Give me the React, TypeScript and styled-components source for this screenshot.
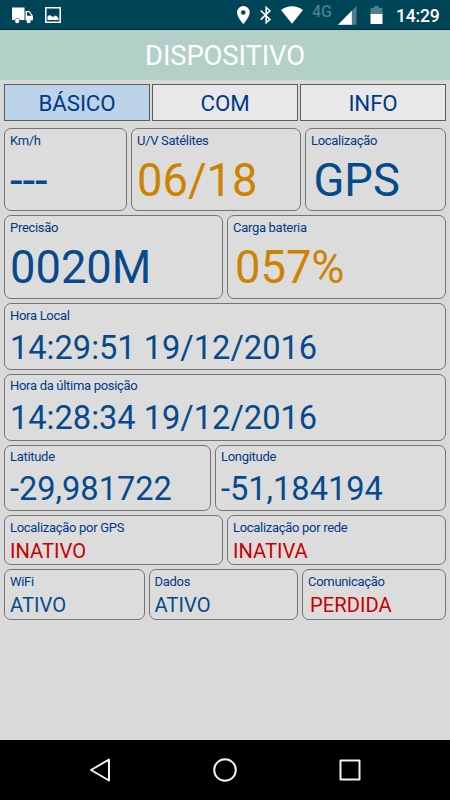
import styled, { createGlobalStyle } from 'styled-components'

const GlobalStyle = createGlobalStyle`
  * {
    box-sizing: border-box;
  }

  body {
    margin: 0;
    font-family: Roboto, 'Liberation Sans', sans-serif;
    background: #d9d9d9;
  }
`

const Screen = styled.div`
  width: 450px;
  height: 800px;
  display: flex;
  flex-direction: column;
  background: #d9d9d9;
  overflow: hidden;
`

const StatusBar = styled.div`
  height: 30px;
  flex-shrink: 0;
  background: #004557;
  border-bottom: 1px solid #002440;

  svg {
    display: block;
  }
`

const Header = styled.h1`
  height: 50px;
  flex-shrink: 0;
  margin: 0;
  background: #b2d0c8;
  color: #fff;
  font-size: 27.4px;
  font-weight: 400;
  letter-spacing: -.1px;
  line-height: 53px;
  text-align: center;
`

const Content = styled.main`
  flex: 1;
  padding: 4px 4px 0;
`

const Tabs = styled.nav`
  display: grid;
  grid-template-columns: repeat(3, 1fr);
  gap: 2px;
  margin-bottom: 7px;
`

const Tab = styled.button<{ $active?: boolean }>`
  height: 37px;
  padding: 0;
  border: 1px solid #5c5c5c;
  background: ${({ $active }) => ($active ? '#bdd3ea' : '#e8e8e8')};
  color: #003a85;
  font-family: inherit;
  font-size: 22.3px;
  letter-spacing: -.1px;
  line-height: 34px;
`

const Rows = styled.div`
  display: flex;
  flex-direction: column;
  gap: 4px;
`

const Row = styled.div<{ $columns: string; $height: number }>`
  display: grid;
  grid-template-columns: ${({ $columns }) => $columns};
  gap: 4px;
  height: ${({ $height }) => $height}px;
`

const Card = styled.section`
  padding: 3.6px 0 0 5px;
  border: 1px solid #747474;
  border-radius: 7px;
  background: #dcdcdc;
  white-space: nowrap;
`

const Label = styled.div`
  color: #003a85;
  font-size: 13px;
  letter-spacing: -.3px;
  line-height: 15px;
`

const sizes = {
  large: { font: 45.3, gap: 10.8 },
  medium: { font: 32.6, gap: 9 },
  small: { font: 20.2, gap: 6 },
}

const colors = {
  blue: '#064a8c',
  orange: '#cc8400',
  red: '#c80000',
}

type Size = keyof typeof sizes
type Color = keyof typeof colors

const Value = styled.div<{ $size: Size; $color: Color; $indent: number }>`
  margin-top: ${({ $size }) => sizes[$size].gap}px;
  padding-left: ${({ $indent }) => $indent}px;
  color: ${({ $color }) => colors[$color]};
  font-size: ${({ $size }) => sizes[$size].font}px;
  line-height: 1;
`

const NavBar = styled.footer`
  height: 60px;
  flex-shrink: 0;
  background: #000;

  svg {
    display: block;
  }
`

interface FieldProps {
  label: string
  value: string
  size: Size
  color?: Color
  indent?: number
}

function Field ({ label, value, size, color = 'blue', indent = 0 }: FieldProps) {
  return (
    <Card>
      <Label>{label}</Label>
      <Value $size={size} $color={color} $indent={indent}>{value}</Value>
    </Card>
  )
}

const StatusLeft = styled.div`
  display: flex;
  gap: 12px;
  padding: 7px 0 0 12px;
`

const StatusRight = styled.div`
  display: flex;
  align-items: flex-start;
  padding-top: 6px;
`

const StatusContent = styled.div`
  display: grid;
  grid-template-columns: 236px 1fr;
`

const Network = styled.span`
  width: 26px;
  margin-top: -2px;
  padding-left: 1px;
  color: #4c7f8b;
  font-size: 16px;
  font-weight: 500;
  line-height: 16px;
`

const Clock = styled.span`
  margin-left: 13px;
  color: #fff;
  font-size: 17.5px;
  font-weight: 500;
  letter-spacing: -.2px;
  line-height: 20px;
`

function StatusIcons () {
  return (
    <StatusContent>
      <StatusLeft>
        <svg width="21" height="17" viewBox="0 0 21 17" fill="#fff">
          <path d="M0 .5h12.5v12.5H8a3 3 0 0 0-5.5 0H0z" />
          <path fillRule="evenodd" d="M13.5 4h4L21 9v4.3h-2a2.7 2.7 0 0 0-4.5 0h-1zM15 5.3v3.5h4.5L17 5.3z" />
          <circle cx="5.2" cy="14" r="2.2" />
          <circle cx="16.7" cy="14" r="2.2" />
        </svg>
        <svg width="16" height="16" viewBox="0 0 16 16">
          <path d="M.8.8h14.4v14.4H.8z" fill="none" stroke="#fff" strokeWidth="1.5" />
          <path d="M2.5 13V9.6L4.5 8l1.8 1L8 9.9l2-1.3 1.7.7 1.8 1.8V13z" fill="#fff" />
        </svg>
      </StatusLeft>
      <StatusRight>
        <svg width="24" height="18" viewBox="0 0 24 18" fill="#fff">
          <path fillRule="evenodd" d="M7.3 0A6.4 6.4 0 0 0 1 6.4C1 11 7.3 18 7.3 18s6.4-7 6.4-11.6A6.4 6.4 0 0 0 7.3 0zm0 4.2a2.3 2.3 0 1 1 0 4.6 2.3 2.3 0 0 1 0-4.6z" />
        </svg>
        <svg width="21" height="18" viewBox="0 0 21 18" fill="none" stroke="#fff" strokeWidth="1.6">
          <path d="M.7 4.5l9.2 8.9-3.7 3.2V1.5l3.7 3.2-9.2 8.9" />
        </svg>
        <svg width="30" height="18" viewBox="0 0 30 18">
          <path d="M0 4.1A17.5 17.5 0 0 1 22 4.1L11 17.7z" fill="#fff" />
        </svg>
        <Network>4G</Network>
        <svg width="33" height="19" viewBox="0 0 33 19">
          <path d="M1 18.7L19.5 0v18.7z" fill="#4c7f8b" />
          <path d="M1 18.7L14.8 4.7v14z" fill="#fff" />
        </svg>
        <svg width="13" height="18" viewBox="0 0 13 18">
          <path d="M1 2h3V0h5v2h3.5v7H.5V2z" fill="#4c7f8b" />
          <path d="M.5 8h12v10H.5z" fill="#fff" />
        </svg>
        <Clock>14:29</Clock>
      </StatusRight>
    </StatusContent>
  )
}

export default function App () {
  return (
    <Screen>
      <GlobalStyle />

      <StatusBar>
        <StatusIcons />
      </StatusBar>

      <Header>DISPOSITIVO</Header>

      <Content>
        <Tabs>
          <Tab $active>BÁSICO</Tab>
          <Tab>COM</Tab>
          <Tab>INFO</Tab>
        </Tabs>

        <Rows>
          <Row $columns="123px 170px 1fr" $height={83}>
            <Field label="Km/h" value="---" size="large" />
            <Field label="U/V Satélites" value="06/18" size="large" color="orange" />
            <Field label="Localização" value="GPS" size="large" indent={2.5} />
          </Row>

          <Row $columns="1fr 1fr" $height={84}>
            <Field label="Precisão" value="0020M" size="large" />
            <Field label="Carga bateria" value="057%" size="large" color="orange" indent={2} />
          </Row>

          <Row $columns="1fr" $height={66.5}>
            <Field label="Hora Local" value="14:29:51 19/12/2016" size="medium" />
          </Row>

          <Row $columns="1fr" $height={67}>
            <Field label="Hora da última posição" value="14:28:34 19/12/2016" size="medium" />
          </Row>

          <Row $columns="207px 1fr" $height={66.5}>
            <Field label="Latitude" value="-29,981722" size="medium" />
            <Field label="Longitude" value="-51,184194" size="medium" />
          </Row>

          <Row $columns="1fr 1fr" $height={50}>
            <Field label="Localização por GPS" value="INATIVO" size="small" color="red" />
            <Field label="Localização por rede" value="INATIVA" size="small" color="red" />
          </Row>

          <Row $columns="140.5px 149.5px 1fr" $height={50.5}>
            <Field label="WiFi" value="ATIVO" size="small" />
            <Field label="Dados" value="ATIVO" size="small" />
            <Field label="Comunicação" value="PERDIDA" size="small" color="red" indent={2} />
          </Row>
        </Rows>
      </Content>

      <NavBar>
        <svg width="450" height="60" viewBox="0 0 450 60" fill="none" stroke="#f2f2f2" strokeWidth="2" strokeLinejoin="round">
          <path d="M109 19.5v21L91 30z" />
          <circle cx="225" cy="30" r="10.8" />
          <rect x="340.5" y="20.5" width="19" height="19" />
        </svg>
      </NavBar>
    </Screen>
  )
}
